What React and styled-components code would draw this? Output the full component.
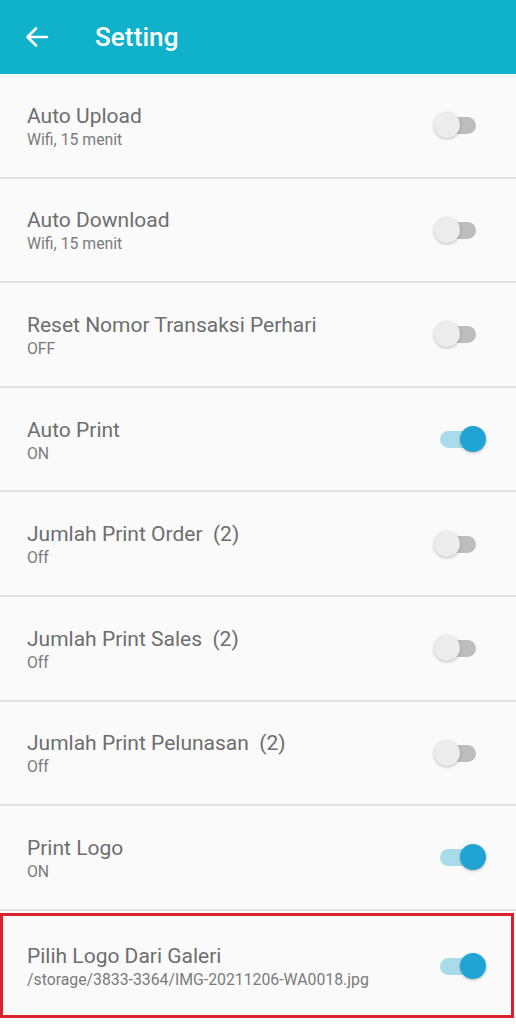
import React from 'react';
import styled, { createGlobalStyle } from 'styled-components';

const GlobalStyle = createGlobalStyle`
    html, body {
        margin: 0;
        padding: 0;
        background: #fafafa;
        font-family: Roboto, 'Liberation Sans', sans-serif;
    }
`;

// 화면 전체
const Screen = styled.div`
    width: 516px;
    min-height: 1024px;
    background: #fafafa;
    display: flex;
    flex-direction: column;
`;

// 상단 툴바
const Toolbar = styled.div`
    height: 74px;
    background: #10b1ca;
    display: flex;
    align-items: center;
    padding-left: 25px;
    box-sizing: border-box;
`;

const BackButton = styled.div`
    width: 24px;
    height: 24px;
    display: flex;
    align-items: center;
    justify-content: center;
    margin-right: 46px;
`;

const Title = styled.div`
    color: #ffffff;
    font-size: 26px;
    font-weight: 500;
    letter-spacing: 0.1px;
`;

// 설정 목록
const List = styled.div`
    display: flex;
    flex-direction: column;
`;

const Row = styled.div`
    height: ${p => (p.$highlight ? '105px' : '104.6px')};
    box-sizing: border-box;
    display: flex;
    align-items: center;
    padding: 2px 27px 0;
    border-bottom: 2px solid #e1e1e1;
    ${p => p.$highlight && `
        border: 3px solid #d9222d;
        margin: 2px 2px 0 0;
        padding: 3px 22px 0 24px;
    `}
`;

const TextBlock = styled.div`
    flex: 1;
    display: flex;
    flex-direction: column;
    gap: 3px;
`;

const Label = styled.div`
    font-size: 21px;
    line-height: 24px;
    color: #6e6e6e;
    white-space: pre;
`;

const Sub = styled.div`
    font-size: 15.8px;
    line-height: 18px;
    color: #7a7a7a;
`;

// 스위치
const Switch = styled.div`
    position: relative;
    width: 54px;
    height: 28px;
    margin-right: 3px;
`;

const Track = styled.div`
    position: absolute;
    left: 8px;
    top: 5px;
    width: 36px;
    height: 17px;
    border-radius: 9px;
    background: ${p => (p.$on ? '#a9dcea' : '#bdbdbd')};
`;

const Thumb = styled.div`
    position: absolute;
    top: 0;
    left: ${p => (p.$on ? '28px' : '2px')};
    width: 26px;
    height: 26px;
    border-radius: 50%;
    background: ${p => (p.$on ? '#1fa4d3' : '#ececec')};
    box-shadow: 0 1px 3px rgba(0, 0, 0, 0.25);
`;

const settings = [
    { label: 'Auto Upload', sub: 'Wifi, 15 menit', on: false },
    { label: 'Auto Download', sub: 'Wifi, 15 menit', on: false },
    { label: 'Reset Nomor Transaksi Perhari', sub: 'OFF', on: false },
    { label: 'Auto Print', sub: 'ON', on: true },
    { label: 'Jumlah Print Order  (2)', sub: 'Off', on: false },
    { label: 'Jumlah Print Sales  (2)', sub: 'Off', on: false },
    { label: 'Jumlah Print Pelunasan  (2)', sub: 'Off', on: false },
    { label: 'Print Logo', sub: 'ON', on: true },
    { label: 'Pilih Logo Dari Galeri', sub: '/storage/3833-3364/IMG-20211206-WA0018.jpg', on: true, highlight: true },
];

const Toggle = ({ on }) => (
    <Switch>
        <Track $on={on} />
        <Thumb $on={on} />
    </Switch>
);

const App = () => {
    return (
        <Screen>
            <GlobalStyle />
            <Toolbar>
                <BackButton>
                    <svg width="24" height="24" viewBox="0 0 24 24" fill="none">
                        <path d="M22 12H3M11 3.5L2.5 12L11 20.5" stroke="#ffffff" strokeWidth="2.6" strokeLinecap="round" strokeLinejoin="round" />
                    </svg>
                </BackButton>
                <Title>Setting</Title>
            </Toolbar>
            <List>
                {settings.map((s, i) => (
                    <Row key={i} $highlight={s.highlight}>
                        <TextBlock>
                            <Label>{s.label}</Label>
                            <Sub>{s.sub}</Sub>
                        </TextBlock>
                        <Toggle on={s.on} />
                    </Row>
                ))}
            </List>
        </Screen>
    );
};

export default App;
